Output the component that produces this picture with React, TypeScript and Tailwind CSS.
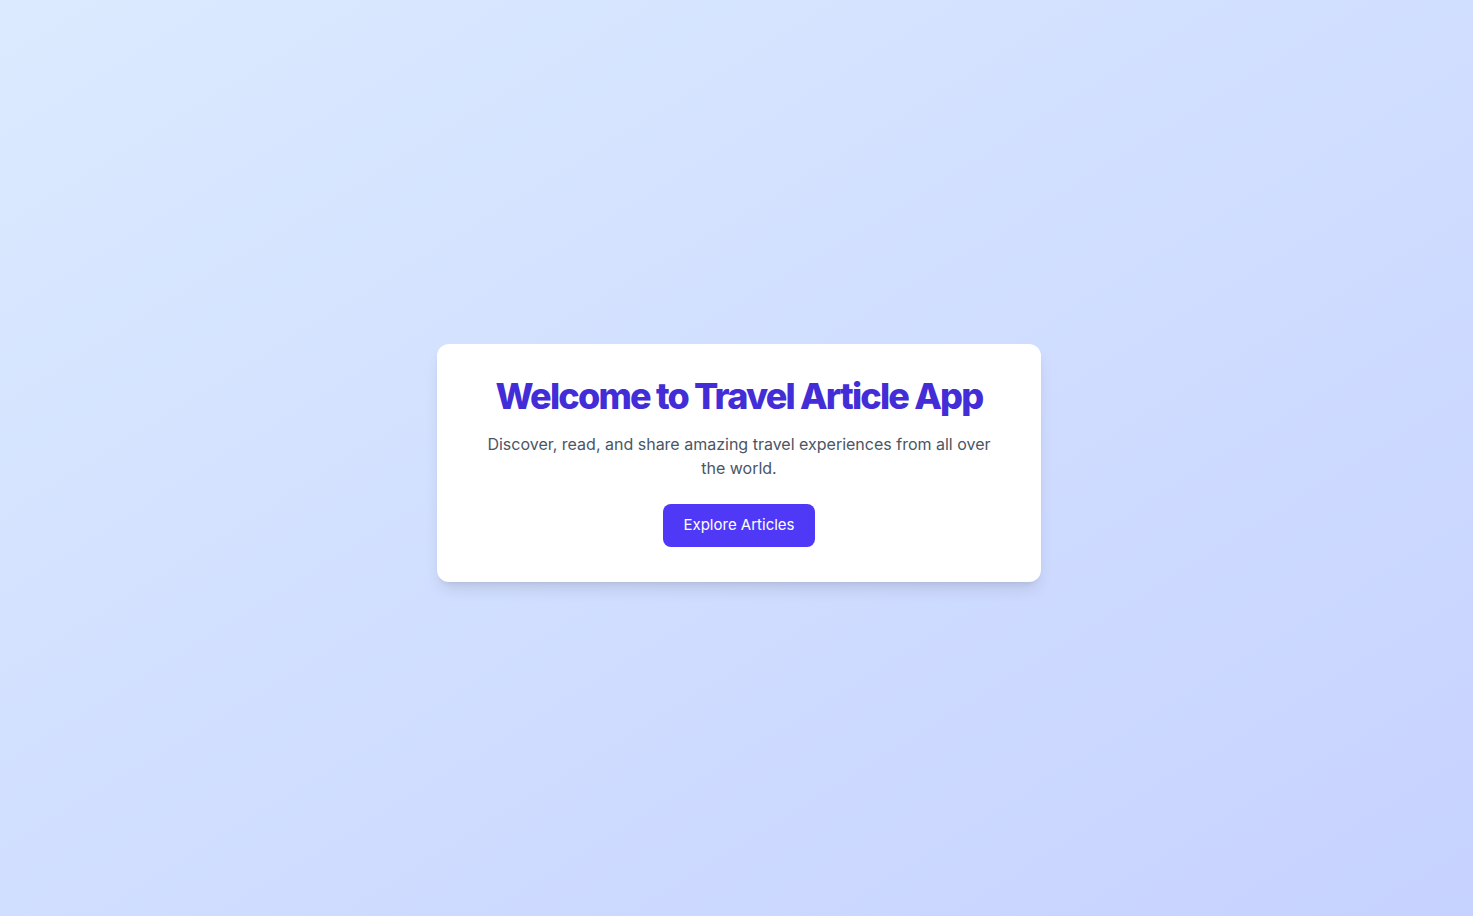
import React from "react";

function App() {
  return (
    <div
      className="min-h-screen flex items-center justify-center pl-[5px] pt-[10px] bg-gradient-to-br from-blue-100 to-indigo-200"
      style={{ fontFamily: "Inter, 'Noto Sans', sans-serif" }}
    >
      {/* Welcome card */}
      <div className="w-[604px] bg-white rounded-xl shadow-lg px-12 pt-8 pb-[35px] text-center">
        <h1 className="text-4xl font-extrabold tracking-tighter text-indigo-700 mb-4">Welcome to Travel Article App</h1>
        <p className="text-base leading-6 text-gray-600 mb-6">
          Discover, read, and share amazing travel experiences from all over the world.
        </p>
        <button className="px-5 h-[43px] bg-indigo-600 text-white rounded-lg text-[15px]">
          Explore Articles
        </button>
      </div>
    </div>
  );
}

export default App;
